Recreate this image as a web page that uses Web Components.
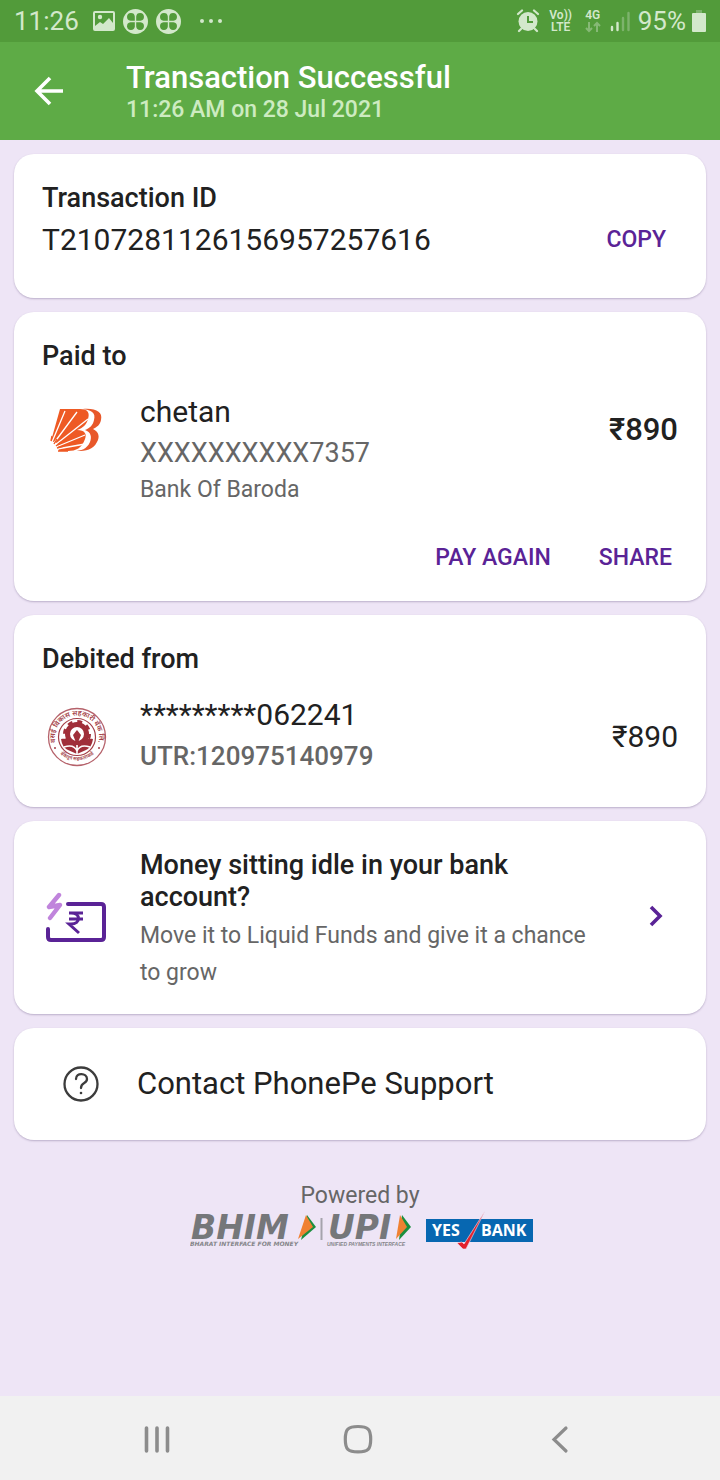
<!DOCTYPE html>
<html lang="en">
<head>
<meta charset="utf-8">
<meta name="viewport" content="width=device-width, initial-scale=1">
<title>Transaction Successful</title>
<style>
html, body { margin: 0; }
body {
  font-family: Roboto, "Noto Sans", sans-serif;
  color: #212121;
  background: #eee5f6;
}
</style>
</head>
<body>
<payment-page></payment-page>

<script>
function define(name, html) {
  const template = document.createElement('template');
  template.innerHTML = html;
  customElements.define(name, class extends HTMLElement {
    constructor() {
      super();
      this.attachShadow({ mode: 'open' }).append(template.content.cloneNode(true));
    }
  });
}

define('status-bar', `
<style>
:host { display: flex; align-items: center; height: 42px; padding: 0 14px; background: #529b3a; color: #d3e8cb; font-size: 26px; line-height: 32px; }
svg { display: block; flex: none; }
.left, .right { display: flex; align-items: center; }
.left { gap: 8px; flex: 1; }
.right { gap: 6px; }
.stack { display: flex; flex-direction: column; align-items: center; font-size: 12px; line-height: 12px; font-weight: 600; width: 22px; }
.wide { width: 30px; }
.clock { padding-right: 6px; }
</style>
<div class="left">
  <span class="clock">11:26</span>
  <svg width="22" height="20" viewBox="0 0 22 20"><rect x="1" y="1" width="20" height="18" rx="1" fill="none" stroke="#d3e8cb" stroke-width="2"/><circle cx="7" cy="6" r="2.2" fill="#d3e8cb"/><path d="M2 15l5-4 3 2 6-6 4 5v6H2z" fill="#d3e8cb"/></svg>
  <svg width="25" height="25" viewBox="0 0 25 25"><circle cx="12.500" cy="12.500" r="12.500" fill="#d3e8cb"/><g fill="#529b3a"><path d="M11.800 11.800H7.500A3.900 3.900 0 1 1 11.800 7.500z"/><path d="M13.200 11.800h4.300A3.900 3.900 0 1 0 13.200 7.500z"/><path d="M11.800 13.200H7.500A3.900 3.900 0 1 0 11.800 17.500z"/><path d="M13.200 13.200h4.300A3.900 3.900 0 1 1 13.200 17.500z"/></g></svg>
  <svg width="25" height="25" viewBox="0 0 25 25"><circle cx="12.500" cy="12.500" r="12.500" fill="#d3e8cb"/><g fill="#529b3a"><path d="M11.800 11.800H7.500A3.900 3.900 0 1 1 11.800 7.500z"/><path d="M13.200 11.800h4.300A3.900 3.900 0 1 0 13.200 7.500z"/><path d="M11.800 13.200H7.500A3.900 3.900 0 1 0 11.800 17.500z"/><path d="M13.200 13.200h4.300A3.900 3.900 0 1 1 13.200 17.500z"/></g></svg>
  <svg width="38" height="6" viewBox="0 0 38 6" fill="#d3e8cb"><circle cx="13" cy="3" r="2"/><circle cx="22" cy="3" r="2"/><circle cx="31" cy="3" r="2"/></svg>
</div>
<div class="right">
  <svg width="24" height="24" viewBox="0 0 24 24"><g fill="none" stroke="#d3e8cb" stroke-width="2.200" stroke-linecap="round"><path d="M2 5l4-3.500M22 5l-4-3.500M5 20l-2 2M19 20l2 2"/></g><circle cx="12" cy="12.500" r="9.500" fill="#d3e8cb"/><path d="M12 7v6h5" fill="none" stroke="#529b3a" stroke-width="2"/></svg>
  <span class="stack wide"><span>Vo))</span><span>LTE</span></span>
  <span class="stack"><span>4G</span><svg width="16" height="12" viewBox="0 0 16 12" fill="none" stroke="#86b976" stroke-width="2"><path d="M4 1v9M1 7l3 3 3-3M12 11V2M9 5l3-3 3 3"/></svg></span>
  <svg width="22" height="22" viewBox="0 0 22 22" stroke-width="2.400" stroke-linecap="round"><path d="M2 17v3M7.500 13v7" stroke="#d3e8cb"/><path d="M13 8v12M18.500 3v17" stroke="#7db36c"/></svg>
  <span>95%</span>
  <svg width="14" height="22" viewBox="0 0 14 22"><path d="M4 0h6v4H4z" fill="#7db36c"/><rect y="3" width="14" height="19" rx="1" fill="#d3e8cb"/></svg>
</div>`);

define('app-header', `
<style>
:host { display: flex; align-items: center; min-height: 98px; padding: 0 28px; background: #5eab46; color: #fff; }
button { border: 0; padding: 0; margin: 0; background: none; width: 42px; height: 42px; display: grid; place-items: center; }
.text { padding: 2px 0 0 56px; }
h1 { margin: 0; font-size: 31px; line-height: 36px; font-weight: 500; }
p { margin: 0; font-size: 23px; line-height: 28px; font-weight: 500; color: #cdebc1; }
</style>
<button type="button" aria-label="Back"><svg width="30" height="30" viewBox="0 0 30 30" fill="none" stroke="#fff" stroke-width="3.600"><path d="M29 15H3M16 2L3 15l13 13"/></svg></button>
<div class="text"><h1><slot></slot></h1><p><slot name="time"></slot></p></div>`);

define('info-card', `
<style>
:host { display: block; background: #fff; border-radius: 20px; box-shadow: 0 1px 2px rgba(70, 50, 100, .3); padding: 28px; }
</style>
<slot></slot>`);

define('card-title', `
<style>
:host { display: block; }
h2 { margin: 0; font-size: 27px; line-height: 32px; font-weight: 500; color: #212121; }
</style>
<h2><slot></slot></h2>`);

define('text-button', `
<style>
:host { display: block; }
button { display: block; border: 0; margin: 0; padding: 0; background: none; font: 500 23px/40px Roboto, sans-serif; color: #5a2396; }
</style>
<button type="button"><slot></slot></button>`);

define('copy-row', `
<style>
:host { display: flex; align-items: center; justify-content: space-between; margin: 6px 12px 10px 0; font-size: 30px; line-height: 40px; }
</style>
<slot></slot><slot name="action"></slot>`);

define('party-row', `
<style>
:host { display: flex; align-items: flex-start; margin-top: 20px; --side: 76px; }
:host([compact]) { --side: 84px; }
.icon { flex: none; width: 98px; height: var(--side); box-sizing: border-box; padding-left: 5px; display: flex; align-items: center; }
.text { flex: 1; min-width: 0; }
.name { font-size: 30px; line-height: 40px; }
.account { font-size: 27px; line-height: 42px; color: #666; }
:host([compact]) .account { font-size: 26px; font-weight: 500; }
.bank { font-size: 23px; line-height: 32px; color: #666; }
.amount { height: var(--side); display: flex; align-items: center; font-size: 31px; line-height: 40px; font-weight: 500; }
:host([compact]) .amount { font-size: 30px; font-weight: 400; }
:host([compact]) .bank { display: none; }
</style>
<div class="icon"><slot name="icon"></slot></div>
<div class="text">
  <div class="name"><slot></slot></div>
  <div class="account"><slot name="account"></slot></div>
  <div class="bank"><slot name="bank"></slot></div>
</div>
<div class="amount"><slot name="amount"></slot></div>`);

define('card-actions', `
<style>
:host { display: flex; justify-content: flex-end; gap: 48px; margin: 32px 6px -5px 0; }
</style>
<slot></slot>`);

define('baroda-logo', `
<style>:host { display: block; } svg { display: block; }</style>
<svg width="58" height="58" viewBox="0 0 58 58" role="img" aria-label="Bank of Baroda">
  <path d="M36 8c13-1 20 3 18 11-1 5-4 7-8 9 6 3 7 8 4 13-4 8-11 9-20 9z" fill="#e8582a"/>
  <path d="M32 8c13 0 17 4 15 11-1 5-4 8-9 10 6 2 7 7 5 12-3 7-9 9-16 9z" fill="#fff"/>
  <path d="M13 8h20c8 0 10 4 8 10-1 5-5 9-11 11 8 0 10 4 8 9-3 9-9 12-17 12H11L4 40z" fill="#ee5a24"/>
  <path d="M5 41L18 10M7 42L30 11M8 44L41 18M9 46l29-12M10 48l28-5" stroke="#fff" stroke-width="1.300"/>
  <path d="M4 40l6 2 2 8H3z" fill="#fff"/>
  <path d="M4 40l1-5M7 43l3-5M9 45l5-4M10 47l7-2M11 50h10" stroke="#ee5a24" stroke-width="1.400"/>
</svg>`);

define('vasai-logo', `
<style>:host { display: block; } svg { display: block; } text { font-family: "Noto Sans Devanagari", "Noto Sans", sans-serif; font-weight: 600; fill: #a43f48; }</style>
<svg width="60" height="60" viewBox="0 0 60 60" role="img" aria-label="Vasai Vikas Sahakari Bank">
  <circle cx="30" cy="30" r="28.500" fill="none" stroke="#b5616a" stroke-width="1.300"/>
  <circle cx="30" cy="30" r="18.500" fill="#fff" stroke="#a43f48" stroke-width="1.200"/>
  <path id="top" d="M9 37A22 22 0 1 1 51 37" fill="none"/>
  <path id="low" d="M11 45A26 26 0 0 0 49 45" fill="none"/>
  <text font-size="7"><textPath href="#top" startOffset="50%" text-anchor="middle">वसई विकास सहकारी बँक लि.</textPath></text>
  <text font-size="5"><textPath href="#low" startOffset="50%" text-anchor="middle">बँकेतून सहकाराकडे</textPath></text>
  <circle cx="8" cy="41" r="1" fill="#a43f48"/><circle cx="52" cy="41" r="1" fill="#a43f48"/>
  <circle cx="30" cy="27" r="9.500" fill="none" stroke="#a02f3a" stroke-width="5"/>
  <circle cx="30" cy="27" r="12.500" fill="none" stroke="#a02f3a" stroke-width="3" stroke-dasharray="4.900 4.900"/>
  <path d="M14 32c8-1 13 2 16 8 3-6 8-9 16-8-1 6-3 9-7 11l-9 4-9-4c-4-2-6-5-7-11z" fill="#a02f3a"/>
  <path d="M30 23l4 5-4 10-4-10z" fill="#a02f3a"/>
  <path d="M17 40c6-2 11-1 13 4 2-5 7-6 13-4M30 38v9" fill="none" stroke="#fff" stroke-width="1.600"/>
</svg>`);

define('fund-icon', `
<style>:host { display: block; } svg { display: block; }</style>
<svg width="60" height="54" viewBox="0 0 60 54" fill="none">
  <path d="M22 14h33q3 0 3 3v30q0 3-3 3H5q-3 0-3-3v-8" stroke="#5a2396" stroke-width="4" stroke-linecap="round"/>
  <path d="M13 5L3 17l11-2L4 28" stroke="#c084dc" stroke-width="4.400" stroke-linecap="round" stroke-linejoin="round"/>
  <path d="M23 23h14M23 29h14M25 23c10 0 10 11 0 11h-2l10 9" stroke="#5a2396" stroke-width="3"/>
</svg>`);

define('promo-row', `
<style>
:host { display: flex; align-items: center; margin-bottom: -5px; }
.icon { flex: none; width: 98px; box-sizing: border-box; padding: 0 0 6px 4px; }
.text { flex: 1; min-width: 0; padding-right: 48px; }
h2 { margin: 0 0 4px; font-size: 27px; line-height: 32px; font-weight: 500; }
p { margin: 0; font-size: 23px; line-height: 37px; color: #666; }
button { border: 0; margin: 0 12px 0 0; padding: 0 0 8px; background: none; }
button svg { display: block; }
</style>
<div class="icon"><slot name="icon"></slot></div>
<div class="text"><h2><slot></slot></h2><p><slot name="detail"></slot></p></div>
<button type="button" aria-label="Open"><svg width="18" height="24" viewBox="0 0 18 24" fill="none" stroke="#5a2396" stroke-width="3.600"><path d="M3 3l9 9-9 9"/></svg></button>`);

define('support-row', `
<style>
:host { display: block; margin: 4px 0; }
a { display: flex; align-items: center; gap: 37px; min-height: 48px; padding-left: 20px; color: inherit; text-decoration: none; font-size: 31px; line-height: 40px; }
svg { display: block; flex: none; }
</style>
<a href="#support"><svg width="38" height="38" viewBox="0 0 38 38" fill="none" stroke="#3c3c3c" stroke-width="2.300" stroke-linecap="round"><circle cx="19" cy="19" r="16.500"/><path d="M14 14c0-7 11-6 11 0 0 5-6 3-6 9"/><circle cx="19" cy="28" r="1.300" fill="#3c3c3c" stroke="none"/></svg><slot></slot></a>`);

define('powered-by', `
<style>
:host { display: flex; flex-direction: column; align-items: center; padding: 30px 0; color: #666; }
p { margin: 0; font-size: 23px; line-height: 24px; }
.logos { display: flex; align-items: center; gap: 14px; padding-left: 4px; }
svg { display: block; }
.yes { font: 700 16px "Open Sans", sans-serif; fill: #fff; }
.mark { font: italic 700 33px "DejaVu Sans", sans-serif; fill: #75777a; }
.tag { font: italic 700 5px "Liberation Sans", sans-serif; fill: #85868a; }
.bhim { font-family: "DejaVu Sans", sans-serif; font-size: 6px; }
</style>
<p>Powered by</p>
<div class="logos">
  <svg width="222" height="42" viewBox="0 -2 222 42" role="img" aria-label="BHIM UPI">
    <path d="M117 5l9 12-15 13z" fill="#1b8f3f"/><path d="M116 5l7 12-15 12z" fill="#f08132"/>
    <path d="M131.500 8v22" stroke="#a5a3ac" stroke-width="2"/>
    <path d="M212 5l9 12-12 13z" fill="#1b8f3f"/><path d="M210 5l7 12-11 12z" fill="#f08132"/>
    <text class="mark" x="1" y="29">BHIM</text>
    <text class="mark" x="138" y="29">UPI</text>
    <text class="tag bhim" x="0" y="36">BHARAT INTERFACE FOR MONEY</text>
    <text class="tag" x="137" y="36">UNIFIED PAYMENTS INTERFACE</text>
  </svg>
  <svg width="108" height="42" viewBox="0 -2 108 42" role="img" aria-label="Yes Bank">
    <rect x="0" y="9" width="107" height="23" fill="#0767b1"/>
    <text class="yes" x="6" y="26">YES</text><text class="yes" x="55" y="26">BANK</text>
    <path d="M31 33l5-1 2 2L59 1 40 39h-3z" fill="#e3212d" stroke="#eee5f6" stroke-width=".6"/>
  </svg>
</div>`);

define('nav-bar', `
<style>
:host { display: grid; grid-template-columns: repeat(3, 1fr); align-items: center; min-height: 84px; padding: 0 60px 0 56px; box-sizing: border-box; background: #f1f1f1; }
button { border: 0; margin: 0; padding: 2px 0 0; background: none; justify-self: center; }
svg { display: block; }
</style>
<button type="button" aria-label="Recent apps"><svg width="32" height="32" viewBox="0 0 32 32" stroke="#8c8c8c" stroke-width="3.600" stroke-linecap="round"><path d="M5.500 5v23M16 5v23M26.500 5v23"/></svg></button>
<button type="button" aria-label="Home"><svg width="32" height="32" viewBox="0 0 32 32" fill="none" stroke="#8c8c8c" stroke-width="3.200"><path d="M16 3.500c10 0 12.700 2.500 12.700 12.700S26 28.900 16 28.900 3.300 26.400 3.300 16.200 6 3.500 16 3.500z"/></svg></button>
<button type="button" aria-label="Back"><svg width="32" height="32" viewBox="0 0 32 32" fill="none" stroke="#8c8c8c" stroke-width="3.200" stroke-linecap="round"><path d="M23 5L11 16.500 23 28"/></svg></button>`);

define('payment-page', `
<style>
:host { display: flex; flex-direction: column; min-height: 100vh; }
main { flex: 1; display: flex; flex-direction: column; gap: 14px; padding: 14px; }
</style>
<status-bar></status-bar>
<app-header>Transaction Successful<span slot="time">11:26 AM on 28 Jul 2021</span></app-header>
<main>
  <info-card>
    <card-title>Transaction ID</card-title>
    <copy-row>T2107281126156957257616<text-button slot="action">COPY</text-button></copy-row>
  </info-card>
  <info-card>
    <card-title>Paid to</card-title>
    <party-row>
      <baroda-logo slot="icon"></baroda-logo>chetan
      <span slot="account">XXXXXXXXXX7357</span>
      <span slot="bank">Bank Of Baroda</span>
      <span slot="amount">₹890</span>
    </party-row>
    <card-actions><text-button>PAY AGAIN</text-button><text-button>SHARE</text-button></card-actions>
  </info-card>
  <info-card>
    <card-title>Debited from</card-title>
    <party-row compact>
      <vasai-logo slot="icon"></vasai-logo>*********062241
      <span slot="account">UTR:120975140979</span>
      <span slot="amount">₹890</span>
    </party-row>
  </info-card>
  <info-card>
    <promo-row>
      <fund-icon slot="icon"></fund-icon>Money sitting idle in your bank account?
      <span slot="detail">Move it to Liquid Funds and give it a chance to grow</span>
    </promo-row>
  </info-card>
  <info-card><support-row>Contact PhonePe Support</support-row></info-card>
  <powered-by></powered-by>
</main>
<nav-bar></nav-bar>`);
</script>
</body>
</html>
